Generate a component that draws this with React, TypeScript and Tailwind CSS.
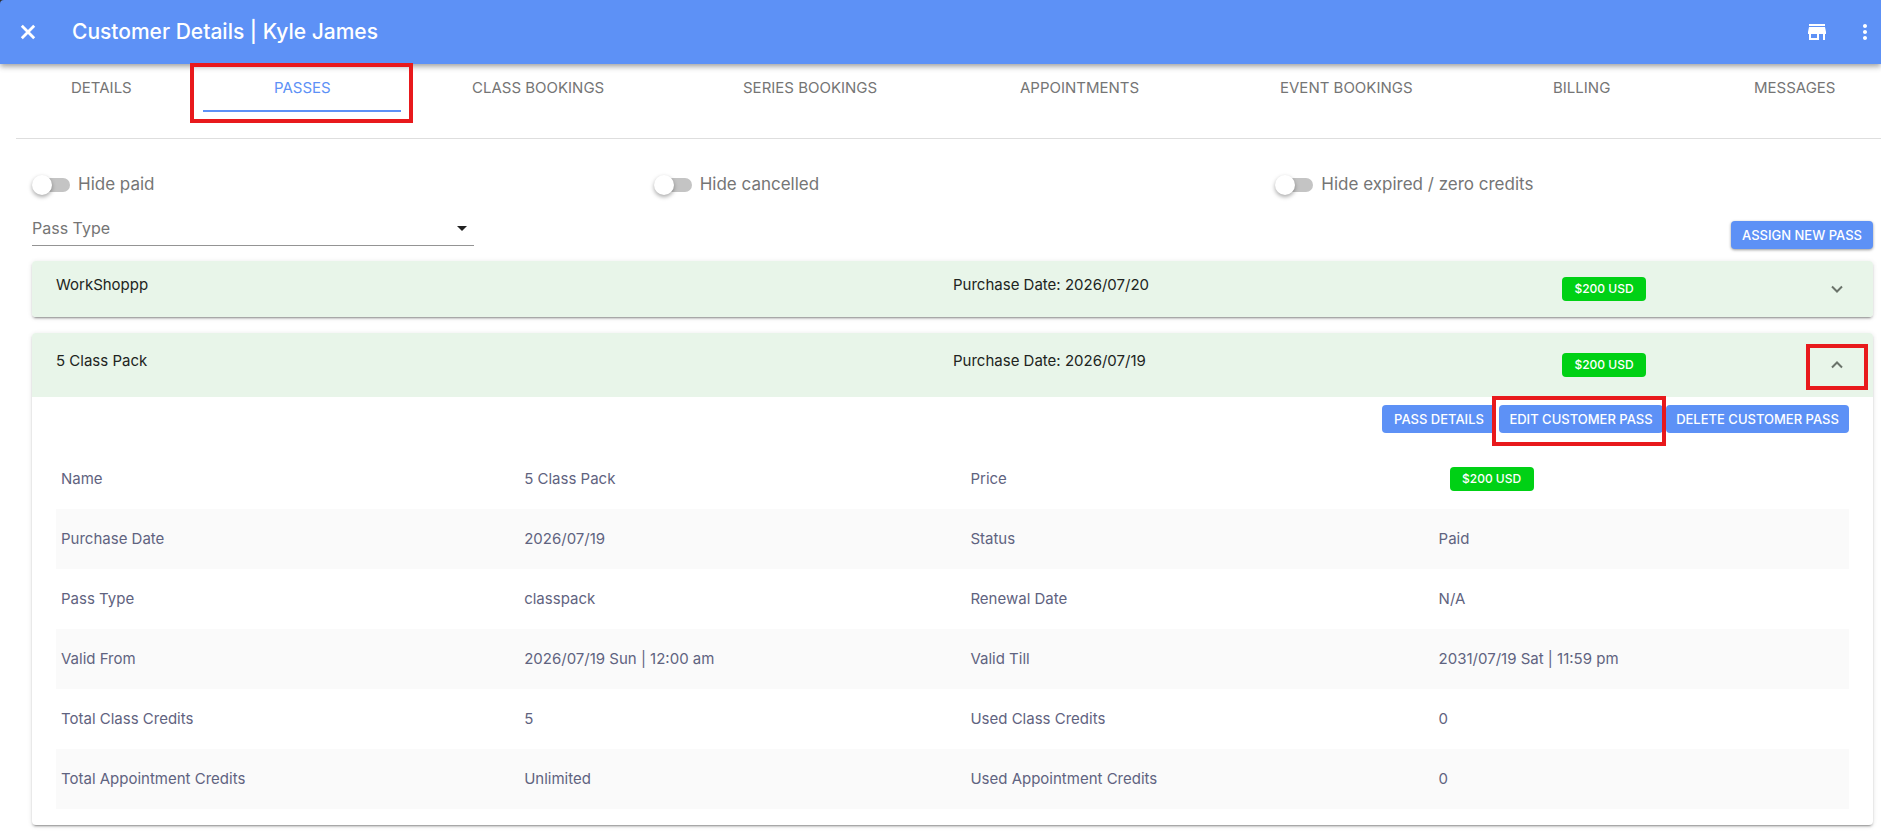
import { useState } from 'react'
import { MdArrowDropDown, MdClose, MdMoreVert, MdStore } from 'react-icons/md'
import clsx from 'clsx'

interface Pass {
  id: number
  name: string
  purchaseDate: string
  price: string
  details: [string, string, string, string][]
}

const TABS = [
  'DETAILS',
  'PASSES',
  'CLASS BOOKINGS',
  'SERIES BOOKINGS',
  'APPOINTMENTS',
  'EVENT BOOKINGS',
  'BILLING',
  'MESSAGES',
]

const FILTERS = ['Hide paid', 'Hide cancelled', 'Hide expired / zero credits']

const PASSES: Pass[] = [
  { id: 1, name: 'WorkShoppp', purchaseDate: '2026/07/20', price: '$200 USD', details: [] },
  {
    id: 2,
    name: '5 Class Pack',
    purchaseDate: '2026/07/19',
    price: '$200 USD',
    details: [
      ['Name', '5 Class Pack', 'Price', '$200 USD'],
      ['Purchase Date', '2026/07/19', 'Status', 'Paid'],
      ['Pass Type', 'classpack', 'Renewal Date', 'N/A'],
      ['Valid From', '2026/07/19 Sun | 12:00 am', 'Valid Till', '2031/07/19 Sat | 11:59 pm'],
      ['Total Class Credits', '5', 'Used Class Credits', '0'],
      ['Total Appointment Credits', 'Unlimited', 'Used Appointment Credits', '0'],
    ],
  },
]

// Red frame drawn over the parent, which has to be relative
function Highlight({ className }: { className: string }) {
  return <span className={clsx('pointer-events-none absolute z-10 border-4 border-[#e8191c]', className)} />
}

function PriceBadge({ price }: { price: string }) {
  return (
    <span className="inline-flex h-6 w-[84px] items-center justify-center rounded bg-[#00d115] text-xs font-medium text-white">
      {price}
    </span>
  )
}

function ActionButton({ label, className }: { label: string; className?: string }) {
  return (
    <button
      type="button"
      className={clsx('h-7 rounded bg-[#5d91f6] pt-px text-center text-[13px] font-medium whitespace-nowrap text-white', className)}
    >
      {label}
    </button>
  )
}

function Chevron({ open }: { open: boolean }) {
  return (
    <svg viewBox="0 0 12 8" className={clsx('h-2 w-3', open && 'rotate-180')} fill="none" stroke="#6a736a" strokeWidth="2">
      <path d="M1 1.5l5 5 5-5" />
    </svg>
  )
}

function PassDetails({ pass }: { pass: Pass }) {
  return (
    <div className="px-6 pt-2 pb-4">
      <div className="flex justify-end gap-[3px]">
        <ActionButton label="PASS DETAILS" className="w-[114px]" />
        <div className="relative flex">
          <ActionButton label="EDIT CUSTOMER PASS" className="w-[164px]" />
          <Highlight className="-top-[9px] -right-[3px] -bottom-[13px] -left-[7px]" />
        </div>
        <ActionButton label="DELETE CUSTOMER PASS" className="w-[183px]" />
      </div>

      <table className="mt-4 w-full table-fixed text-[15px] text-[#5f6380]">
        <colgroup>
          <col className="w-[26%]" />
          <col className="w-[25%]" />
          <col className="w-[26%]" />
          <col />
        </colgroup>
        <tbody>
          {pass.details.map(([label, value, label2, value2]) => (
            <tr key={label} className="h-[60px] even:bg-[#fafafa]">
              <th scope="row" className="pl-[5px] text-left font-normal">{label}</th>
              <td className="pl-0.5">{value}</td>
              <th scope="row" className="text-left font-normal">{label2}</th>
              <td className="pl-0.5">
                {label2 === 'Price' ? (
                  <div className="flex pl-[11px]"><PriceBadge price={value2} /></div>
                ) : value2}
              </td>
            </tr>
          ))}
        </tbody>
      </table>
    </div>
  )
}

function PassPanel({ pass, open, onToggle }: { pass: Pass; open: boolean; onToggle: () => void }) {
  return (
    <section className="rounded bg-white shadow-[0_3px_1px_-2px_rgba(0,0,0,0.2),0_2px_2px_0_rgba(0,0,0,0.14),0_1px_5px_0_rgba(0,0,0,0.12)]">
      <button
        type="button"
        aria-expanded={open}
        onClick={onToggle}
        className={clsx(
          'grid w-full grid-cols-[897fr_609fr_311fr] items-center bg-[#e8f5e9] pl-6 text-left text-[15px] text-[#212421]',
          open ? 'h-16 rounded-t' : 'h-14 rounded'
        )}
      >
        <span className="pb-2">{pass.name}</span>
        <span className="pb-2">Purchase Date: {pass.purchaseDate}</span>
        <span className="flex items-center justify-between pr-[30px]">
          <PriceBadge price={pass.price} />
          <span className="relative">
            <Chevron open={open} />
            {open && <Highlight className="-top-[17px] -right-[25px] -bottom-[21px] -left-[25px]" />}
          </span>
        </span>
      </button>
      {open && <PassDetails pass={pass} />}
    </section>
  )
}

export default function App() {
  const [activeTab, setActiveTab] = useState('PASSES')
  const [openPass, setOpenPass] = useState<number | null>(2)

  return (
    <div className="min-h-screen overflow-x-hidden bg-white font-['Inter',sans-serif]">
      <div className="bg-[#333]">
        <header className="relative flex h-16 items-center rounded-tl bg-[#5d91f6] pr-1 pl-4 text-white shadow-[0_2px_4px_-1px_rgba(0,0,0,0.2),0_4px_5px_0_rgba(0,0,0,0.14),0_1px_10px_0_rgba(0,0,0,0.12)]">
          <button type="button" aria-label="Close" className="mr-8">
            <svg viewBox="0 0 24 24" className="size-6" fill="none" stroke="currentColor" strokeWidth="2.8">
              <path d="M5.8 5.8l12.4 12.4M18.2 5.8L5.8 18.2" />
            </svg>
          </button>
          <h1 className="flex-1 text-[21px] font-medium">Customer Details | Kyle James</h1>
          <button type="button" aria-label="Store" className="mr-6">
            <MdStore size={24} />
          </button>
          <button type="button" aria-label="More options">
            <MdMoreVert size={24} />
          </button>
        </header>
      </div>

      <nav className="grid grid-cols-[203fr_198fr_271fr_277fr_260fr_273fr_201fr_198fr]">
        {TABS.map((tab) => (
          <button
            key={tab}
            type="button"
            onClick={() => setActiveTab(tab)}
            className={clsx(
              'relative h-12 border-b-2 pt-0.5 pl-[71px] text-left text-[15px] whitespace-nowrap',
              tab === activeTab ? 'border-[#5d91f6] text-[#5d91f6]' : 'border-transparent text-[#757575]'
            )}
          >
            {tab}
            {tab === activeTab && <Highlight className="-top-px -right-3 -bottom-[13px] -left-[13px]" />}
          </button>
        ))}
      </nav>

      <main className="ml-4 pt-[26px]">
        <div className="border-t border-[#dedede] pt-[34px] pl-4">
          <div className="-mr-4 grid grid-cols-3">
            {FILTERS.map((filter) => (
              <label key={filter} className="flex h-6 items-center gap-2 pl-0.5 text-[17px] text-[#757575]">
                <input
                  type="checkbox"
                  role="switch"
                  className="relative h-3.5 w-9 appearance-none rounded-full bg-[#c4c4c4] before:absolute before:-top-[3px] before:-left-0.5 before:size-5 before:rounded-full before:bg-white before:shadow-[0_2px_4px_rgba(0,0,0,0.35)] checked:bg-[#a9c5fb] checked:before:left-[18px] checked:before:bg-[#5d91f6]"
                />
                {filter}
              </label>
            ))}
          </div>
        </div>

        <div className="pr-2 pl-4">
          <div className="flex items-end justify-between pt-[15px]">
            <div className="relative mb-[3px] w-[442px]">
              <select
                aria-label="Pass Type"
                className="h-[34px] w-full appearance-none border-b border-[#949494] bg-transparent pb-0.5 text-base text-[#757575]"
              >
                <option>Pass Type</option>
              </select>
              <MdArrowDropDown size={24} className="pointer-events-none absolute top-1 right-0 text-[#212121]" />
            </div>
            <ActionButton label="ASSIGN NEW PASS" className="w-[142px] shadow-[0_1px_3px_rgba(0,0,0,0.4)]" />
          </div>

          <div className="mt-3 flex flex-col gap-4 pb-1.5">
            {PASSES.map((pass) => (
              <PassPanel
                key={pass.id}
                pass={pass}
                open={openPass === pass.id}
                onToggle={() => setOpenPass(openPass === pass.id ? null : pass.id)}
              />
            ))}
          </div>
        </div>
      </main>
    </div>
  )
}
